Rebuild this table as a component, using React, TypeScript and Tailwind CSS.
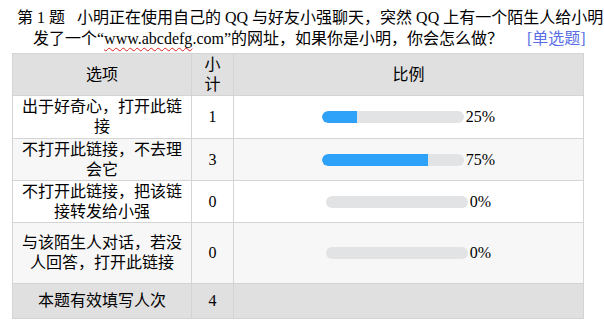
const rows = [
  { label: '出于好奇心，打开此链接', count: 1, pct: 25, bg: 'bg-white', h: 'h-[43px]' },
  { label: '不打开此链接，不去理会它', count: 3, pct: 75, bg: 'bg-[#f7f7f7]', h: 'h-[42px]' },
  { label: '不打开此链接，把该链接转发给小强', count: 0, pct: 0, bg: 'bg-white', h: 'h-[42px]' },
  { label: '与该陌生人对话，若没人回答，打开此链接', count: 0, pct: 0, bg: 'bg-[#f7f7f7]', h: 'h-[61px]' },
]

const font = { fontFamily: '"Liberation Serif", "Noto Sans CJK SC", serif' }

const Bar = ({ pct }: { pct: number }) => (
  <div className="flex items-center justify-center">
    <div className="w-[142px] h-[12px] rounded-full bg-[#e2e3e5] overflow-hidden">
      <div className="h-full bg-[#2ea2f8] rounded-l-full" style={{ width: `${pct}%` }} />
    </div>
    <span className="ml-[2px] leading-[20px]">{pct}%</span>
  </div>
)

const App = () => {
  return (
    <div className="w-[604px] h-[330px] bg-white text-black text-[16px]" style={font}>
      <div className="pt-[8px] pl-[17px] leading-[20px] whitespace-nowrap">
        第 1 题&nbsp;&nbsp; 小明正在使用自己的 QQ 与好友小强聊天，突然 QQ 上有一个陌生人给小明
      </div>
      <div className="pl-[33px] mt-[1px] leading-[20px] whitespace-nowrap">
        发了一个“
        <span className="underline decoration-wavy decoration-[#e02020] decoration-1 underline-offset-[3px]">www.abcdefg</span>
        .com”的网址，如果你是小明，你会怎么做？
        <span className="ml-[24px] text-[#5a6fe6]">[单选题]</span>
      </div>

      <div className="ml-[12px] mt-[4px] w-[572px] border border-[#d4d4d4]">
        <div className="grid grid-cols-[179px_42px_1fr] h-[42px] bg-[#e0e0e0] border-b border-[#d4d4d4]">
          <div className="flex items-center justify-center border-r border-[#d4d4d4]">选项</div>
          <div className="flex items-center justify-center text-center leading-[20px] px-[12px] border-r border-[#d4d4d4]">小计</div>
          <div className="flex items-center justify-center">比例</div>
        </div>
        {rows.map((r) => (
          <div key={r.label} className={`grid grid-cols-[179px_42px_1fr] ${r.h} ${r.bg} border-b border-[#d4d4d4]`}>
            <div className="flex items-center justify-center text-center leading-[20px] px-[8px] border-r border-[#d4d4d4]">
              {r.label}
            </div>
            <div className="flex items-center justify-center border-r border-[#d4d4d4]">{r.count}</div>
            <Bar pct={r.pct} />
          </div>
        ))}
        <div className="grid grid-cols-[179px_42px_1fr] h-[34px] bg-[#e0e0e0]">
          <div className="flex items-center justify-center border-r border-[#d4d4d4]">本题有效填写人次</div>
          <div className="flex items-center justify-center border-r border-[#d4d4d4]">4</div>
          <div />
        </div>
      </div>
    </div>
  )
}

export default App
